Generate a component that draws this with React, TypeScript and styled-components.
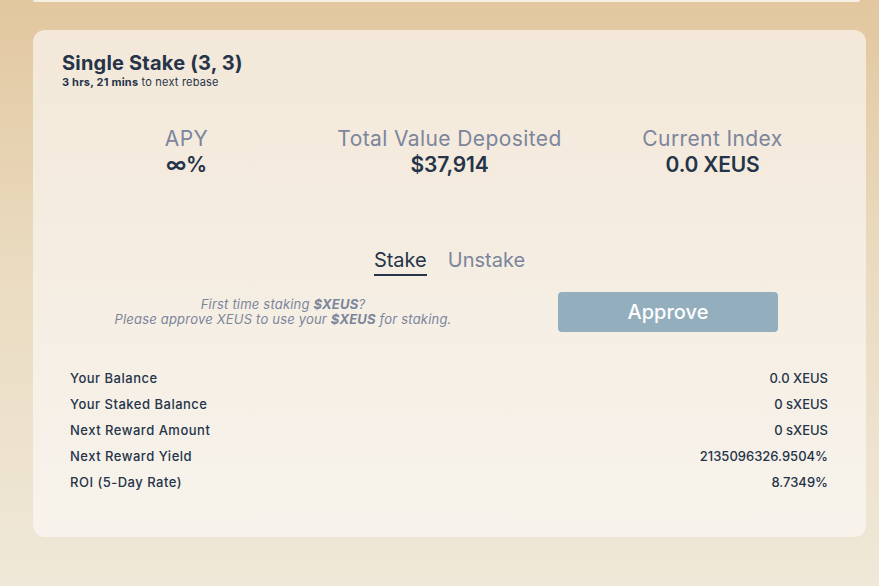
import React from 'react';
import styled, { createGlobalStyle } from 'styled-components';

const GlobalStyle = createGlobalStyle`
  html, body {
    margin: 0;
    padding: 0;
    height: 100%;
  }
  body {
    font-family: 'Inter', 'Noto Sans', sans-serif;
    background: linear-gradient(180deg, #e2c79f 0%, #eadbc0 45%, #efe8d8 100%);
    overflow: hidden;
  }
`;

const rows = [
  { label: 'Your Balance', value: '0.0 XEUS' },
  { label: 'Your Staked Balance', value: '0 sXEUS' },
  { label: 'Next Reward Amount', value: '0 sXEUS' },
  { label: 'Next Reward Yield', value: '2135096326.9504%' },
  { label: 'ROI (5-Day Rate)', value: '8.7349%' },
];

export default function App(): JSX.Element {
  return (
    <>
      <GlobalStyle />
      <Page>
        <PrevCard />
        <Card>
          <Header>
            <Title>Single Stake (3, 3)</Title>
            <Rebase>
              <b>3 hrs, 21 mins</b> to next rebase
            </Rebase>
          </Header>

          <Stats>
            <Stat>
              <StatLabel>APY</StatLabel>
              <StatValue>∞%</StatValue>
            </Stat>
            <Stat>
              <StatLabel>Total Value Deposited</StatLabel>
              <StatValue>$37,914</StatValue>
            </Stat>
            <Stat>
              <StatLabel>Current Index</StatLabel>
              <StatValue>0.0 XEUS</StatValue>
            </Stat>
          </Stats>

          <Tabs>
            <Tab active>Stake</Tab>
            <Tab>Unstake</Tab>
          </Tabs>

          <ApproveRow>
            <Notice>
              First time staking <b>$XEUS</b>?
              <br />
              Please approve XEUS to use your <b>$XEUS</b> for staking.
            </Notice>
            <ApproveButton>Approve</ApproveButton>
          </ApproveRow>

          <DataList>
            {rows.map((r) => (
              <DataRow key={r.label}>
                <RowLabel>{r.label}</RowLabel>
                <span>{r.value}</span>
              </DataRow>
            ))}
          </DataList>
        </Card>
      </Page>
    </>
  );
}

const Page = styled.div`
  padding: 0 13px 0 33px;
  display: flex;
  flex-direction: column;
  gap: 28px;
`;

const PrevCard = styled.div`
  height: 2px;
  margin: 0 6px 0 0;
  background: #f6efe3;
  border-radius: 0 0 12px 12px;
`;

const Card = styled.div`
  background: linear-gradient(180deg, #f3e8d9 0%, #f7f3ec 100%);
  border-radius: 12px;
  padding: 20px 22px 42px;
  color: #253449;
`;

const Header = styled.div`
  padding-left: 7px;
`;

const Title = styled.div`
  font-size: 20px;
  font-weight: 700;
  line-height: 26px;
  letter-spacing: 0.2px;
`;

const Rebase = styled.div`
  font-size: 11px;
  line-height: 12px;
  letter-spacing: 0.2px;
  b {
    font-weight: 700;
  }
`;

const Stats = styled.div`
  display: grid;
  grid-template-columns: repeat(3, 1fr);
  margin-top: 38px;
`;

const Stat = styled.div`
  text-align: center;
`;

const StatLabel = styled.div`
  font-size: 21px;
  line-height: 26px;
  letter-spacing: 0.4px;
  color: #7b859c;
`;

const StatValue = styled.div`
  font-size: 21px;
  font-weight: 600;
  line-height: 26px;
  letter-spacing: -0.2px;
`;

const Tabs = styled.div`
  display: flex;
  justify-content: center;
  gap: 21px;
  margin-top: 69px;
`;

const Tab = styled.div<{ active?: boolean }>`
  font-size: 20px;
  line-height: 26px;
  padding-bottom: 1px;
  color: ${(p) => (p.active ? '#253449' : '#7b859c')};
  border-bottom: 2px solid ${(p) => (p.active ? '#253449' : 'transparent')};
`;

const ApproveRow = styled.div`
  display: grid;
  grid-template-columns: 1fr 220px;
  column-gap: 47px;
  align-items: center;
  padding-right: 66px;
  margin-top: 16px;
`;

const Notice = styled.div`
  text-align: center;
  font-style: italic;
  font-size: 13px;
  line-height: 15px;
  letter-spacing: 0.2px;
  color: #7b859c;
  b {
    font-weight: 700;
  }
`;

const ApproveButton = styled.button`
  height: 40px;
  border: none;
  border-radius: 4px;
  background: #93aebd;
  color: #ffffff;
  font-family: inherit;
  font-size: 20px;
  font-weight: 500;
  cursor: pointer;
`;

const DataList = styled.div`
  display: flex;
  flex-direction: column;
  padding: 0 16px 0 15px;
  margin-top: 33px;
`;

const DataRow = styled.div`
  display: flex;
  justify-content: space-between;
  font-size: 13px;
  font-weight: 500;
  line-height: 26px;
`;

const RowLabel = styled.span`
  letter-spacing: 0.5px;
`;
